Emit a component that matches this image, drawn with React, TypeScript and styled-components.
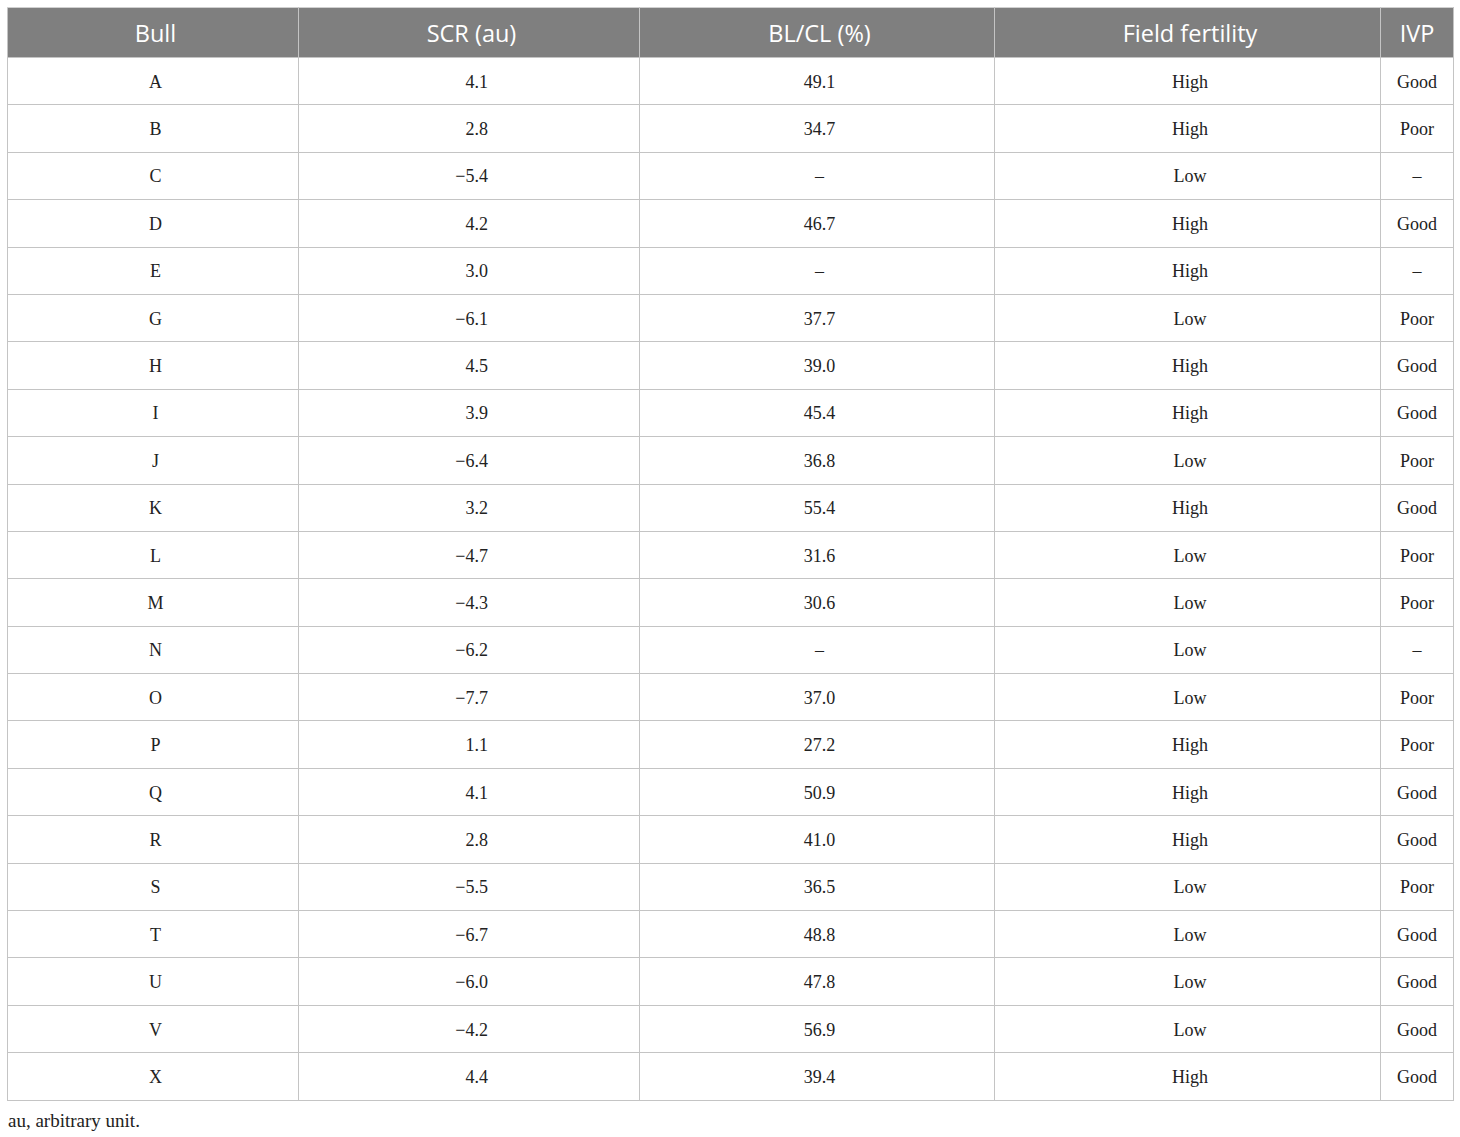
import React from "react";
import styled, { createGlobalStyle } from "styled-components";

const Global = createGlobalStyle`
  html, body { margin: 0; padding: 0; background: #ffffff; }
  body { font-family: "Liberation Serif", "Times New Roman", serif; }
`;

const Page = styled.div`
  padding: 7px 7px 0 7px;
  width: 1446px;
`;

const Table = styled.table`
  border-collapse: collapse;
  width: 1446px;
  table-layout: fixed;
`;

const HeadCell = styled.th<{ $w: number; $narrow?: boolean }>`
  width: ${(p) => p.$w}px;
  height: 50px;
  box-sizing: border-box;
  padding: 0 0 0 ${(p) => (p.$narrow ? "0" : "5px")};
  background: #7f7f7f;
  color: #ffffff;
  font-family: "Open Sans", "Noto Sans", sans-serif;
  font-weight: 400;
  font-size: 23.5px;
  text-align: center;
  vertical-align: middle;
  border: 1px solid #c4c4c4;
  border-top-color: #d0d0d0;
`;

const Cell = styled.td<{ $right?: boolean; $narrow?: boolean }>`
  height: 47.4px;
  box-sizing: border-box;
  padding: 2px ${(p) => (p.$right ? "151px" : "0")} 0
    ${(p) => (p.$narrow ? "0" : "5px")};
  color: #222222;
  font-family: "Liberation Serif", "Times New Roman", serif;
  font-size: 18px;
  text-align: ${(p) => (p.$right ? "right" : "center")};
  vertical-align: middle;
  border: 1px solid #c4c4c4;
`;

const Note = styled.div`
  margin-top: 9px;
  font-family: "Liberation Serif", "Times New Roman", serif;
  font-size: 19px;
  line-height: 22px;
  color: #222222;
  padding-left: 1px;
`;

const cols = [
  { label: "Bull", w: 291 },
  { label: "SCR (au)", w: 341 },
  { label: "BL/CL (%)", w: 355 },
  { label: "Field fertility", w: 386 },
  { label: "IVP", w: 73, narrow: true },
];

const rows: [string, string, string, string, string][] = [
  ["A", "4.1", "49.1", "High", "Good"],
  ["B", "2.8", "34.7", "High", "Poor"],
  ["C", "\u22125.4", "\u2013", "Low", "\u2013"],
  ["D", "4.2", "46.7", "High", "Good"],
  ["E", "3.0", "\u2013", "High", "\u2013"],
  ["G", "\u22126.1", "37.7", "Low", "Poor"],
  ["H", "4.5", "39.0", "High", "Good"],
  ["I", "3.9", "45.4", "High", "Good"],
  ["J", "\u22126.4", "36.8", "Low", "Poor"],
  ["K", "3.2", "55.4", "High", "Good"],
  ["L", "\u22124.7", "31.6", "Low", "Poor"],
  ["M", "\u22124.3", "30.6", "Low", "Poor"],
  ["N", "\u22126.2", "\u2013", "Low", "\u2013"],
  ["O", "\u22127.7", "37.0", "Low", "Poor"],
  ["P", "1.1", "27.2", "High", "Poor"],
  ["Q", "4.1", "50.9", "High", "Good"],
  ["R", "2.8", "41.0", "High", "Good"],
  ["S", "\u22125.5", "36.5", "Low", "Poor"],
  ["T", "\u22126.7", "48.8", "Low", "Good"],
  ["U", "\u22126.0", "47.8", "Low", "Good"],
  ["V", "\u22124.2", "56.9", "Low", "Good"],
  ["X", "4.4", "39.4", "High", "Good"],
];

export default function App() {
  return (
    <>
      <Global />
      <Page>
        <Table>
          <thead>
            <tr>
              {cols.map((c) => (
                <HeadCell key={c.label} $w={c.w} $narrow={c.narrow}>
                  {c.label}
                </HeadCell>
              ))}
            </tr>
          </thead>
          <tbody>
            {rows.map((r) => (
              <tr key={r[0]}>
                <Cell>{r[0]}</Cell>
                <Cell $right>{r[1]}</Cell>
                <Cell>{r[2]}</Cell>
                <Cell>{r[3]}</Cell>
                <Cell $narrow>{r[4]}</Cell>
              </tr>
            ))}
          </tbody>
        </Table>
        <Note>au, arbitrary unit.</Note>
      </Page>
    </>
  );
}
